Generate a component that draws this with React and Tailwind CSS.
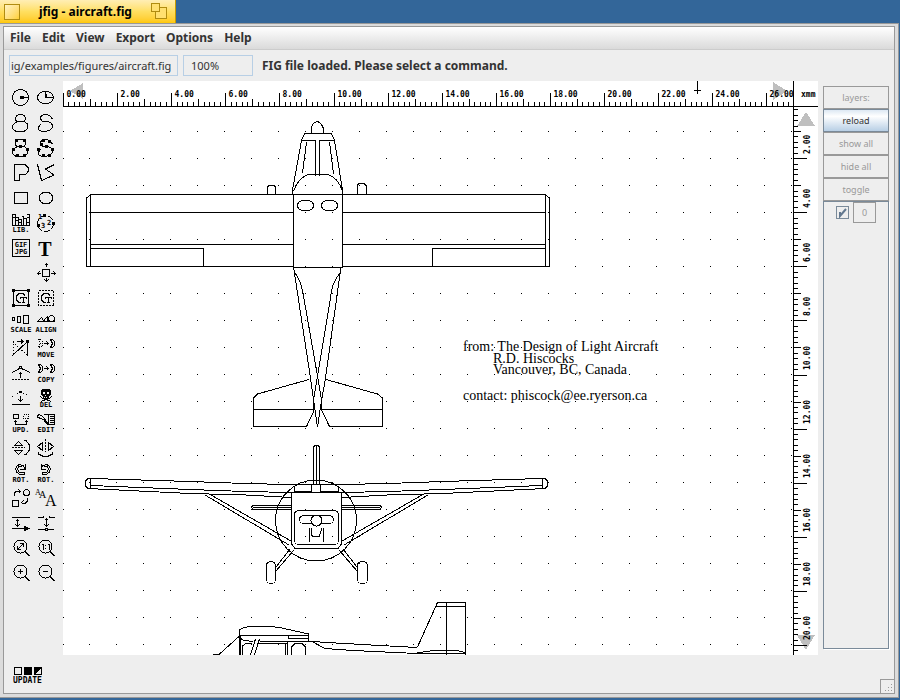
import React, { useLayoutEffect, useRef, useState } from 'react';

const menus = ['File', 'Edit', 'View', 'Export', 'Options', 'Help'];
const layerActions = ['show all', 'hide all', 'toggle'];

const Caption = ({ children, x = 13 }) => (
    <text x={x} y="22" textAnchor="middle" fill="#000" stroke="none" className="font-['DejaVu_Sans_Mono',monospace] text-[7px] font-bold">
        {children}
    </text>
);

// Square control points of the interpolated splines
const Knots = ({ points }) => points.map(([x, y]) => (
    <rect key={`${x}-${y}`} x={x - 1} y={y - 1} width="3" height="3" fill="#000" stroke="none" />
));

const closedSpline = 'M9.5 11.5C6 10 7 4.5 12.5 4.5S18.5 10 15.5 11.5C22 13.5 21 21 14 21.5H10C3 21 3 14 9.5 11.5H15.5';
const openSpline = 'M19.5 9.5C18 5 15 4.5 11.5 4.5C7 5.5 6 8 9.5 11.5H15C21 13.5 20.5 19 15.5 20.5C10 22.5 4 21 5.5 17L7.5 14.5';

const Magnifier = () => (
    <>
        <circle cx="12.5" cy="11.5" r="6.5" />
        <path d="M17 16l5 5M17 17l4 4" />
    </>
);

const CompoundGlyph = () => (
    <path d="M15 8.500H11L8.5 11V15L11 17.5H13M15 8.5l2 2M12 12.5h6M15.5 12.5v5M14 17.5h3M12.5 12v2M18.5 12v2" />
);

const tools = [
    { name: 'Circle', icon: <><circle cx="12.5" cy="12.5" r="8" /><path d="M12 12.5h8M12 11.5h3v2h-3z" /></> },
    { name: 'Ellipse', icon: <><ellipse cx="12.5" cy="12.5" rx="8" ry="6" /><path d="M12.5 6.5v6h8M13.5 9v3" /></> },
    { name: 'Closed spline', icon: <path d={closedSpline} /> },
    { name: 'Open spline', icon: <path d={openSpline} /> },
    {
        name: 'Closed interpolated spline',
        icon: <><path d={closedSpline} /><Knots points={[[8, 5], [16, 5], [12, 11], [5, 14], [19, 14], [9, 20], [16, 20]]} /></>
    },
    {
        name: 'Open interpolated spline',
        icon: <><path d={openSpline} /><Knots points={[[10, 5], [16, 6], [8, 9], [13, 11], [5, 14], [19, 14], [10, 20], [16, 20]]} /></>
    },
    { name: 'Polygon', icon: <path d="M6.5 4.5H17L20.5 8V11L17.5 14.5H11.5V20.5H6.5z" /> },
    { name: 'Polyline', icon: <path d="M4.5 4.5L8.5 20.5L21 15L12.5 9L21.5 4.5" /> },
    { name: 'Rectangle', icon: <rect x="6.5" y="7.5" width="13" height="11" /> },
    { name: 'Rounded rectangle', icon: <rect x="6.5" y="7.5" width="13" height="11" rx="5" /> },
    {
        name: 'Library',
        icon: (
            <>
                <path d="M4.5 15.5V4.5h3v11M7.5 7.5h3v8M10.5 9.5h3v6M13.5 6.5h2v9M15.5 8.5h3v7M18.5 4.5h3v11M4 15.5h18M5 7h2M8 10h2M11 12h2M19 7h2M19 12h2" />
                <Caption>LIB.</Caption>
            </>
        )
    },
    {
        name: 'Arc',
        icon: (
            <>
                <circle cx="12.5" cy="13.5" r="8" strokeDasharray="6 2" />
                <Knots points={[[11, 5], [20, 13], [5, 15]]} />
                <g fill="#000" stroke="none" className="font-['DejaVu_Sans_Mono',monospace] text-[7px] font-bold">
                    <text x="5" y="9">1</text>
                    <text x="14" y="15">2</text>
                    <text x="8" y="18">3</text>
                </g>
            </>
        )
    },
    {
        name: 'Image',
        icon: (
            <>
                <rect x="4.5" y="4.5" width="17" height="17" />
                <g fill="#000" stroke="none" textAnchor="middle" className="font-['DejaVu_Sans_Mono',monospace] text-[7px] font-bold">
                    <text x="13" y="12">GIF</text>
                    <text x="13" y="19">JPG</text>
                </g>
            </>
        )
    },
    {
        name: 'Text',
        icon: <text x="12" y="21" textAnchor="middle" fill="#000" stroke="none" className="font-['Liberation_Serif',serif] text-[20px] font-bold">T</text>
    },
    null,
    {
        name: 'Move view',
        icon: <path d="M9.5 9.5h7v7h-7zM13.5 3v4M11.5 5.5l2-2 2 2M13.5 18v4M11.5 19.5l2 2 2-2M4 13.5h4M6.5 11.5l-2 2 2 2M18 13.5h5M20.5 11.5l2 2-2 2" />
    },
    {
        name: 'Compound',
        icon: <><rect x="5.5" y="5.5" width="15" height="15" /><Knots points={[[5, 5], [20, 5], [5, 20], [20, 20]]} /><CompoundGlyph /></>
    },
    {
        name: 'Break compound',
        icon: <><rect x="5.5" y="5.5" width="15" height="15" strokeDasharray="2 1" /><CompoundGlyph /></>
    },
    { name: 'Scale', icon: <><path d="M4.5 7.5h2v3h-2zM9.5 6.5h3v6h-3zM15.5 5.5h5v8h-5z" /><Caption>SCALE</Caption></> },
    {
        name: 'Align',
        icon: <><path d="M4.5 11.5L8.5 7.5L11 11.5zM11.5 11.5v-2l3-3v5z" /><circle cx="18.5" cy="8.5" r="3" /><path d="M4 11.5h18" /><Caption>ALIGN</Caption></>
    },
    {
        name: 'Move point',
        icon: (
            <>
                <path d="M19.5 6v15M4.5 20.5L19.5 6.5" />
                <path d="M5.5 6v15M5 7l15 14" strokeDasharray="1 2" />
                <path d="M9 6.5h6M13 4.5l2 2-2 2" />
                <Knots points={[[19, 6]]} />
            </>
        )
    },
    {
        name: 'Move object',
        icon: (
            <>
                <path d="M5.5 4.5h2l2 2v4l-2 2h-2l2-4z" strokeDasharray="1 1" />
                <path d="M11 8.5h4M13.5 6.5l2 2-2 2M17.5 4.5h2l2 2v4l-2 2h-2l2-4z" />
                <Caption>MOVE</Caption>
            </>
        )
    },
    {
        name: 'Add point',
        icon: <><path d="M4 12.5L11.5 8.5M13.5 8.5L22 12.5M11.5 6.5h2v2h-2zM12.5 12v6M10.5 14.5l2-2 2 2" /><path d="M4 19.5h18" strokeDasharray="2 1" /></>
    },
    {
        name: 'Copy object',
        icon: <><path d="M5.5 4.5h2l2 2v4l-2 2h-2l2-4zM11 8.5h4M13.5 6.5l2 2-2 2M17.5 4.5h2l2 2v4l-2 2h-2l2-4z" /><Caption>COPY</Caption></>
    },
    {
        name: 'Delete point',
        icon: <><path d="M4 11.5L12.5 7.5L22 11.5" strokeDasharray="1 2" /><path d="M11.5 6l2 2M13.5 6l-2 2M12.5 11v6M10.5 14.5l2 2 2-2M4 19.5h18" /></>
    },
    {
        name: 'Delete object',
        icon: (
            <>
                <path d="M9 4h8v1h1v5h-1v1h-1v3h-6v-3H9v-1H8V5h1z" fill="#000" stroke="none" />
                <path d="M10 7h2v2h-2zM14 7h2v2h-2zM12 10h1v1h-1zM11 12h1v1h-1zM13 12h1v1h-1z" fill="#eee" stroke="none" />
                <path d="M7 11.5l3 2 8 3M19 11.5l-3 2-8 3" />
                <Caption>DEL</Caption>
            </>
        )
    },
    {
        name: 'Update object',
        icon: (
            <>
                <path d="M5.5 4.5h5v4h-5z" />
                <path d="M15.5 4.5h5v4h-5z" strokeDasharray="1 1" />
                <path d="M7.5 10.5v4h11v-4M5.5 12.5l2-2 2 2M16.5 12.5l2-2 2 2" />
                <Caption>UPD.</Caption>
            </>
        )
    },
    {
        name: 'Edit object',
        icon: <><path d="M15.5 4.5h6v10h-6zM17 6.5h4M17 8.5h4M17 10.5h4M17 12.5h4M15 4.5h-4M15 14.5l-4-4M4.5 5.5l2-1 3 2 5 6-6-4-4-1z" /><Caption>EDIT</Caption></>
    },
    {
        name: 'Flip vertically',
        icon: <><path d="M4 12.5h13" strokeDasharray="2 1" /><path d="M6.5 10.5L10.5 6.5L14.5 10.5zM6.5 15.5h8l-4 4zM16 5.5h2l3 4v6l-3 4h-2" /></>
    },
    {
        name: 'Flip horizontally',
        icon: <><path d="M12.5 4v13" strokeDasharray="2 1" /><path d="M9.5 7.5v8l-5-4zM15.5 7.5v8l5-4zM5.5 17v2l4 2h6l4-2v-2" /></>
    },
    {
        name: 'Rotate clockwise',
        icon: <><path d="M17 4v5h-5M17 8.5L15 5.5L11 4.5L8.5 6.5L7.5 9L9 12.5L12 14.5H16M14 6.5H11L9.5 9L11 12H16V15" /><Caption>ROT.</Caption></>
    },
    {
        name: 'Rotate counterclockwise',
        icon: <><path d="M8 4v5h5M8 8.5L10 5.5L14 4.5L16.5 6.5L17.5 9L16 12.5L13 14.5H9M11 6.5H14L15.5 9L14 12H9V15" /><Caption>ROT.</Caption></>
    },
    {
        name: 'Convert',
        icon: <><circle cx="18.5" cy="7.5" r="3" /><path d="M4.5 15.5h6v6h-6zM6.5 11v-3l2-2h4M10.5 4.5l2 2-2 2M19.5 13v3l-2 2h-4M15.5 15.5l-2 2 2 2" /></>
    },
    {
        name: 'Text size',
        icon: (
            <g fill="#000" stroke="none" className="font-['Liberation_Serif',serif]">
                <text x="2" y="10" className="text-[8px]">A</text>
                <text x="6" y="13" className="text-[10px]">A</text>
                <text x="12" y="21" className="text-[16px]">A</text>
            </g>
        )
    },
    {
        name: 'Snap to grid',
        icon: <><path d="M4 7.5h18M9.5 9v8M7.5 11.5l2-2 2 2M7.5 14.5l2 2 2-2M4 18.5h18" /><path d="M16 16l5 2.5-5 2.5z" fill="#000" /></>
    },
    {
        name: 'Snap to point',
        icon: <path d="M5 7.5h5M17 7.5h5M10.5 6v2M16.5 6v2M13.5 8v9M11.5 10.5l2-2 2 2M11.5 14.5l2 2 2-2M5 19.5h7M15 19.5h6M12.5 18.5h2v2h-2z" />
    },
    {
        name: 'Zoom to fit',
        icon: <><Magnifier /><path d="M9.5 14.5l6-6M12 8.5h3.500v3M9.5 11v3.500h3" /></>
    },
    {
        name: 'Zoom 1:1',
        icon: <><Magnifier /><path d="M9 9.5h1.500v5M15 9.5h1.500v5M12.5 10v1M12.5 13v1" /></>
    },
    { name: 'Zoom in', icon: <><Magnifier /><path d="M10 11.5h5M12.5 9v5" /></> },
    { name: 'Zoom out', icon: <><Magnifier /><path d="M10 11.5h5" /></> }
];

const ToolBox = () => (
    <div className="grid grid-cols-[25px_25px] auto-rows-[25px] content-start pl-1 pr-[5px] pt-1">
        {tools.map((tool, i) => tool ? (
            <button key={tool.name} type="button" aria-label={tool.name} className="block size-[25px]">
                <svg width="25" height="25" fill="none" stroke="#000" shapeRendering="crispEdges" className="overflow-visible">
                    {tool.icon}
                </svg>
            </button>
        ) : <span key={i} />)}
    </div>
);

// Rulers have a long tick with a label every 54 pixels and ten short steps between
const range = (count) => Array.from({ length: count }, (_, i) => i);
const tickAt = (i, origin) => Math.round(origin + i * 5.41) + 0.5;

const useSize = () => {
    const ref = useRef(null);
    const [size, setSize] = useState({ width: 0, height: 0 });

    useLayoutEffect(() => {
        const measure = () => {
            const { width, height } = ref.current.getBoundingClientRect();
            setSize({ width, height });
        };
        measure();
        window.addEventListener('resize', measure);
        return () => window.removeEventListener('resize', measure);
    }, []);

    return [ref, size];
};

const HorizontalRuler = () => {
    const [ref, { width }] = useSize();

    return (
        <svg ref={ref} className="block h-[26px] w-full min-w-0" shapeRendering="crispEdges">
            <path d="M7 10L20 2V18zM710 1V19L724 10z" fill="#bfbfbf" />
            {range(Math.ceil(width / 5.41)).map(i => {
                const x = tickAt(i, 0);
                const top = i % 10 === 0 ? 12 : i % 5 === 0 ? 18 : 21;
                return <path key={i} d={`M${x} ${top}V26`} stroke="#000" />;
            })}
            <path d={`M0 25.5H${width}M634.5 0V13M631 9.5h7`} stroke="#000" />
            {range(Math.floor(width / 54) + 1).map(i => (
                <text key={i} x={tickAt(i * 10, 0) + 3} y="16" className="font-['DejaVu_Sans_Mono',monospace] text-[8px] font-bold">
                    {(i * 2).toFixed(2)}
                </text>
            ))}
        </svg>
    );
};

const VerticalRuler = () => {
    const [ref, { height }] = useSize();

    return (
        <svg ref={ref} className="block h-full min-h-0 w-[25px]" shapeRendering="crispEdges">
            <path d="M13 5L22 19H4z" fill="#bfbfbf" />
            <path d="M4 528H22L13 543z" fill="#bfbfbf" />
            {range(Math.ceil(height / 5.41)).slice(1).map(i => {
                const y = tickAt(i, -3);
                const end = i % 10 === 0 ? 14 : i % 5 === 0 ? 8 : 5;
                return <path key={i} d={`M0 ${y}H${end}`} stroke="#000" />;
            })}
            <path d={`M0.5 0V${height}`} stroke="#000" />
            {range(Math.floor(height / 54) + 1).slice(1).map(i => (
                <text key={i} transform={`translate(17 ${i * 54 - 7}) rotate(-90)`} className="font-['DejaVu_Sans_Mono',monospace] text-[8px] font-bold">
                    {(i * 2).toFixed(2)}
                </text>
            ))}
        </svg>
    );
};

const TopView = () => (
    <g>
        {/* wing and flaps */}
        <path d="M293 194.5H91L86.5 198V266.5H293M90.5 194V266M89 212.5H293M91 244.5H293M91 248.5H203.5V266" />
        <path d="M343 194.5H545L549.5 198V266.5H343M545.5 194V266M343 212.5H546M343 244.5H545M545 248.5H432.5V266" />
        <path d="M293.5 194.5H342.5V267.5H293.5z" />
        <path d="M267.5 194V187L269 185.5H274L275.5 187V194M357.5 194V185L359 183.5H364L366.5 186V194" />
        <rect x="297.5" y="200.5" width="16" height="10" rx="6" />
        <rect x="321.5" y="200.5" width="16" height="10" rx="6" />
        {/* nose and windshield */}
        <path d="M311.5 133V128C312 124 315 122 317.5 121.5C320 122 323 126 323.5 129V133" />
        <path d="M292.5 194V190L301.5 140.5L304.5 133.5H331.5L334.5 140.5L342.5 190V194M302 140.5H315.5V176M334 140.5H319.5V176" />
        <path d="M306.5 142L302.5 173M329.5 142L333.5 174M293.5 191C296 184 302 175 310 174.5H326C334 175 340 183 342.5 191" />
        {/* tail boom */}
        <path d="M293.5 267L310.5 378L314.5 407L317.5 427L320.5 407L325.5 378L341 267" />
        <path d="M294.5 272C299 279 301 282 303.5 296L317.5 376L321.5 400V411M340.5 272C335 280 332 284 330.5 298L317.5 376L313.5 400V411" />
        <path d="M309 379.5L257.5 394L253.5 398V426.5H306.5L314 411M253 409.5H313" />
        <path d="M326 379.5L377.5 394L382.5 398V426.5H329.5L322 411M322 409.5H383" />
    </g>
);

const FrontView = () => (
    <g>
        <path d="M313.5 484V447L315 445.5H318L319.5 447V484M316.5 446V484" />
        <path d="M313 484.5H289L245 483.5L190 481.5L91 478.5H88L85.5 481V486L88 488.5L190 493.5L246 495L291 497.5M90.5 478V488M91 485.5L190 489.5L245 491.5L291 492.5" />
        <path d="M320 484.5H343L388 483.5L443 481.5L542 478.5H545L547.5 481V486L545 488.5L443 493.5L387 495L342 497.5M542.5 478V488M542 485.5L443 489.5L388 491.5L342 492.5" />
        <circle cx="316" cy="520.5" r="40.5" />
        <path d="M305 484.5H343M291 492.5H342M291.5 492V544L295 548.5H338L341.5 544V492M294.5 486.5V491.5H311.5V485M338.5 486.5V491.5H320.5V485" />
        <rect x="294.5" y="510.5" width="44" height="34" rx="4" />
        <path d="M291 505.5H253L251.5 507L253 509.5H291M253 507.5H291M342 505.5H380L381.5 507L380 509.5H342M342 507.5H380" />
        <rect x="299.5" y="515.5" width="34" height="8" rx="4" />
        <circle cx="316.5" cy="520.5" r="5.5" fill="#fff" />
        <path d="M309.5 528V542M323.5 528V542M311.5 528V535L313 536.5H319L321.5 530V528" />
        {/* struts and landing gear */}
        <path d="M205 495L289 545M211 495L291 541M428 495L344 545M422 495L342 541" />
        <path d="M290 549L276 567M294 550L276 571M343 549L357 567M339 550L357 571" />
        <rect x="266.5" y="561.5" width="9" height="22" rx="4" />
        <rect x="357.5" y="561.5" width="10" height="22" rx="4" />
    </g>
);

const SideView = () => (
    <g>
        <path d="M213 654.5H219L239.5 636V630C243 627 249 626.5 254 626.5H271L282 628L308.5 634V641.5M239 635.5H309M288.5 636V638.5H308" />
        <path d="M239.5 636V760M240.5 636V760M240 638L244 640.5L253 641.5M260 641.5H312L327 642.5L380 645.5L417 647.5M312 641.5L325 648.5L353 650.5L417 653.5" />
        <path d="M242.5 760V646L246 643.5H252M255.5 639L250.5 655M259.5 639L254.5 655M257 643.5H287M285.5 643V760M287.5 641V760M291.5 760V647L295 643.5H302L305.5 647V760" />
        <path d="M417.5 647L437.5 602.5H465.5V760M436 606.5H465M446.5 603V760M417 653L433 650.5H457L465 652.5M417 653.5H465M417 652.5H421" />
    </g>
);

const Drawing = () => (
    <svg className="block h-full min-h-0 w-full min-w-0" shapeRendering="crispEdges">
        <defs>
            <pattern id="grid" x="26" y="24" width="27" height="27" patternUnits="userSpaceOnUse">
                <rect width="1" height="1" fill="#000" />
            </pattern>
        </defs>
        <rect width="100%" height="100%" fill="url(#grid)" />
        <path d="M0.5 24V4000" stroke="#000" strokeDasharray="1 26" />
        <g transform="translate(-63 -107)">
            <g fill="none" stroke="#000">
                <TopView />
                <FrontView />
                <SideView />
            </g>
            <g className="font-['Liberation_Serif',serif] text-[14px]">
                <text x="463" y="351">from: The Design of Light Aircraft</text>
                <text x="493" y="363">R.D. Hiscocks</text>
                <text x="493" y="374">Vancouver, BC, Canada</text>
                <text x="463" y="400">contact: phiscock@ee.ryerson.ca</text>
            </g>
        </g>
    </svg>
);

const LayerPanel = () => {
    const [visible, setVisible] = useState(true);

    return (
        <div className="mt-[5px] mb-[6px] flex w-[66px] flex-col text-[9px] text-[#999]">
            <button type="button" disabled className="h-[23px] border border-[#999]">layers:</button>
            <button type="button" className="h-[23px] border border-[#7a8a99] bg-linear-to-b from-[#dde8f3] via-white via-30% to-[#b8cfe5] text-[#333]">reload</button>
            {layerActions.map(label => (
                <button key={label} type="button" disabled className="h-[23px] border border-[#999]">{label}</button>
            ))}
            <div className="flex flex-1 items-start justify-center gap-1 border border-[#7a8a99] shadow-[1px_1px_0_#fff]">
                <span className="mt-1 grid size-[13px]">
                    <input
                        type="checkbox"
                        aria-label="Layer 0 visible"
                        checked={visible}
                        onChange={() => setVisible(!visible)}
                        className="col-start-1 row-start-1 size-[13px] appearance-none border border-[#7a8a99]"
                    />
                    {visible && (
                        <svg width="13" height="13" fill="none" stroke="#63788f" className="pointer-events-none col-start-1 row-start-1">
                            <path d="M4 6v4L10 3" strokeWidth="2" />
                        </svg>
                    )}
                </span>
                <button type="button" disabled className="h-[21px] w-[23px] border border-[#999]">0</button>
            </div>
        </div>
    );
};

const TitleBar = () => (
    <div className="flex h-[23px] w-[176px] items-center justify-between border-r border-[#c89b00] bg-linear-to-b from-[#ffeeb4] via-[#ffdf60] to-[#ffc800] px-1">
        <button type="button" aria-label="Close" className="size-4 border border-[#b08c10] bg-linear-to-br from-[#fff3c0] to-[#ffd030]" />
        <span className="text-[12px] font-bold text-black">jfig - aircraft.fig</span>
        <button type="button" aria-label="Zoom" className="pr-[3px]">
            <svg width="17" height="17" fill="#ffe070" stroke="#b08c10" shapeRendering="crispEdges">
                <rect x="4.5" y="4.5" width="11" height="11" />
                <rect x="0.5" y="0.5" width="8" height="8" />
            </svg>
        </button>
    </div>
);

const App = () => {
    const [fileName, setFileName] = useState('ig/examples/figures/aircraft.fig');
    const [zoom, setZoom] = useState('100%');

    return (
        <div className="flex min-h-screen flex-col bg-[#336699] pb-[2px] pr-px font-['Noto_Sans',sans-serif] text-[12px] text-[#333]">
            <TitleBar />
            <div className="flex flex-1 flex-col border-r border-b border-t border-[#999] bg-[#dcdcdc] p-[3px] pt-[2px]">
                <div className="flex flex-1 flex-col border border-[#999] bg-[#eee]">
                    <nav className="flex h-[23px] items-center gap-[11px] border-b border-[#ccc] bg-linear-to-b from-white to-[#dadada] px-[6px] font-bold">
                        {menus.map(menu => (
                            <button key={menu} type="button">{menu}</button>
                        ))}
                    </nav>

                    <div className="flex h-[31px] items-center gap-[5px] px-[5px]">
                        <input
                            aria-label="File name"
                            value={fileName}
                            onChange={(e) => setFileName(e.target.value)}
                            className="h-[21px] w-[169px] border border-[#b8cfe5] px-px text-[11px]"
                        />
                        <input
                            aria-label="Zoom factor"
                            value={zoom}
                            onChange={(e) => setZoom(e.target.value)}
                            className="h-[21px] w-[70px] border border-[#b8cfe5] px-[7px] text-[11px]"
                        />
                        <span className="pl-1 font-bold">FIG file loaded. Please select a command.</span>
                    </div>

                    <div className="flex flex-1 pr-[5px]">
                        <ToolBox />
                        <div className="mr-[5px] grid min-w-0 flex-1 grid-cols-[1fr_25px] grid-rows-[26px_1fr] bg-white text-black">
                            <HorizontalRuler />
                            <svg width="25" height="26" className="block" shapeRendering="crispEdges">
                                <path d="M0.5 0V26M0 25.5H25" stroke="#000" />
                                <text x="8" y="16" className="font-['DejaVu_Sans_Mono',monospace] text-[8px] font-bold">xmm</text>
                            </svg>
                            <Drawing />
                            <VerticalRuler />
                        </div>
                        <LayerPanel />
                    </div>

                    <div className="flex h-[38px] items-end justify-between">
                        <button type="button" aria-label="Update attributes" className="mb-[9px] ml-[9px]">
                            <svg width="32" height="18" fill="none" stroke="#000" shapeRendering="crispEdges">
                                <path d="M1.5 1.5h7v7h-7zM21.5 1.5h7v7h-7z" />
                                <path d="M11 1h8v8h-8zM21 9L29 1H21z" fill="#000" stroke="none" />
                                <text x="0" y="17" fill="#000" stroke="none" className="font-['DejaVu_Sans_Mono',monospace] text-[8px] font-bold">UPDATE</text>
                            </svg>
                        </button>
                        <svg width="14" height="14" className="border-l border-t border-[#999]" shapeRendering="crispEdges">
                            <path d="M10 4h1M7 7h1M10 7h1M4 10h1M7 10h1M10 10h1M1 13h1" stroke="#999" />
                        </svg>
                    </div>
                </div>
            </div>
        </div>
    );
};

export default App;
